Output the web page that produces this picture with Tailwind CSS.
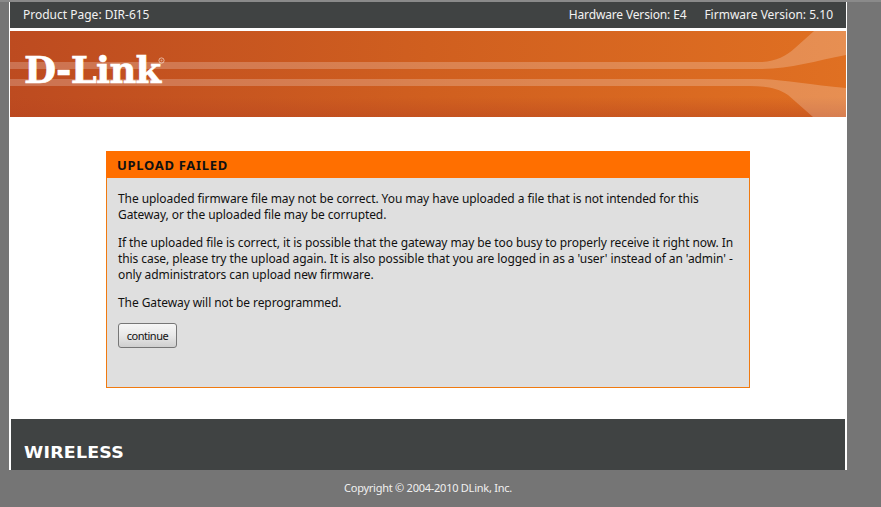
<!DOCTYPE html>
<html lang="en">
<head>
    <meta charset="UTF-8">
    <title>D-Link DIR-615</title>
    <script src="https://cdn.jsdelivr.net/npm/@tailwindcss/browser@4"></script>
</head>
<body class="h-[507px] overflow-hidden bg-[#757575] font-['Noto_Sans',sans-serif] text-[12px] text-[#111]">

    <div class="h-[2px] bg-[#8a8a8a]"></div>

    <div class="ml-[9px] w-[838px] h-[468px] bg-white px-px flex flex-col">

        <div class="h-[26px] shrink-0 bg-[#404343] text-[#f2f2f2] flex justify-between items-center pl-[13px] pr-[13px]">
            <span>Product Page: DIR-615</span>
            <span class="flex gap-[18px]"><span class="tracking-[-0.15px]">Hardware Version: E4</span><span>Firmware Version: 5.10</span></span>
        </div>

        <div class="relative mt-[3px] h-[86px] shrink-0 overflow-hidden bg-gradient-to-r from-[#bd4b20] via-[#d05f1f] to-[#e07022]">
            <div class="absolute inset-x-0 bottom-0 h-[20px] bg-gradient-to-b from-transparent to-[#b8451f]/50"></div>
            <svg class="absolute inset-0" width="836" height="86" viewBox="0 0 836 86">
                <path d="M0 31H748C765 31 775 26 785 17L804 0H836V24C805 30 780 38 750 38H0Z" fill="#fff" fill-opacity=".22"/>
                <path d="M0 48H750C775 49 800 54 836 57V86H803L778 64C768 57 755 55 740 55H0Z" fill="#fff" fill-opacity=".22"/>
                <!-- registered mark -->
                <circle cx="151.5" cy="29.5" r="2.6" fill="none" stroke="#fff" stroke-opacity=".55"/>
                <circle cx="151.5" cy="29.5" r="1" fill="#fff" fill-opacity=".45"/>
            </svg>
            <div class="absolute left-[14px] top-[16px] whitespace-nowrap font-['DejaVu_Serif',serif] font-bold text-white text-[37px] leading-[46px] tracking-[-0.7px] [-webkit-text-stroke:0.6px_white]">D-Link</div>
        </div>

        <div class="flex-1 pt-[34px] pl-[96px]">
            <div class="w-[644px] h-[237px] border border-[#f07a10] bg-[#dfdfdf] flex flex-col">
                <h1 class="h-[27px] shrink-0 -mx-px -mt-px box-content bg-[#ff6f00] pl-[11px] text-[13px] leading-[29px] font-bold tracking-[0.7px] text-[#111]">UPLOAD FAILED</h1>
                <div class="pt-[13px] pl-[11px] pr-[11px] leading-[16px] tracking-[-0.08px]">
                    <p>The uploaded firmware file may not be correct. You may have uploaded a file that is not intended for this Gateway, or the uploaded file may be corrupted.</p>
                    <p class="mt-[12px]">If the uploaded file is correct, it is possible that the gateway may be too busy to properly receive it right now. In this case, please try the upload again. It is also possible that you are logged in as a 'user' instead of an 'admin' - only administrators can upload new firmware.</p>
                    <p class="mt-[12px]">The Gateway will not be reprogrammed.</p>
                    <button class="mt-[12px] block w-[59px] h-[25px] rounded-[3px] border border-[#767676] bg-gradient-to-b from-[#f6f6f6] via-[#e8e8e8] to-[#cfcfcf] text-[11px] tracking-[-0.5px] text-[#111]">continue</button>
                </div>
            </div>
        </div>

        <div class="mx-px h-[51px] shrink-0 bg-[#404343] flex items-end pl-[13px] pb-[9px]">
            <span class="origin-left scale-x-[1.16] font-['DejaVu_Sans',sans-serif] font-bold text-[15px] leading-[16px] tracking-[0.2px] text-white">WIRELESS</span>
        </div>
    </div>

    <div class="w-[856px] text-center text-[11px] tracking-[-0.25px] text-[#f0f0f0] mt-[10px]">Copyright © 2004-2010 DLink, Inc.</div>

</body>
</html>
